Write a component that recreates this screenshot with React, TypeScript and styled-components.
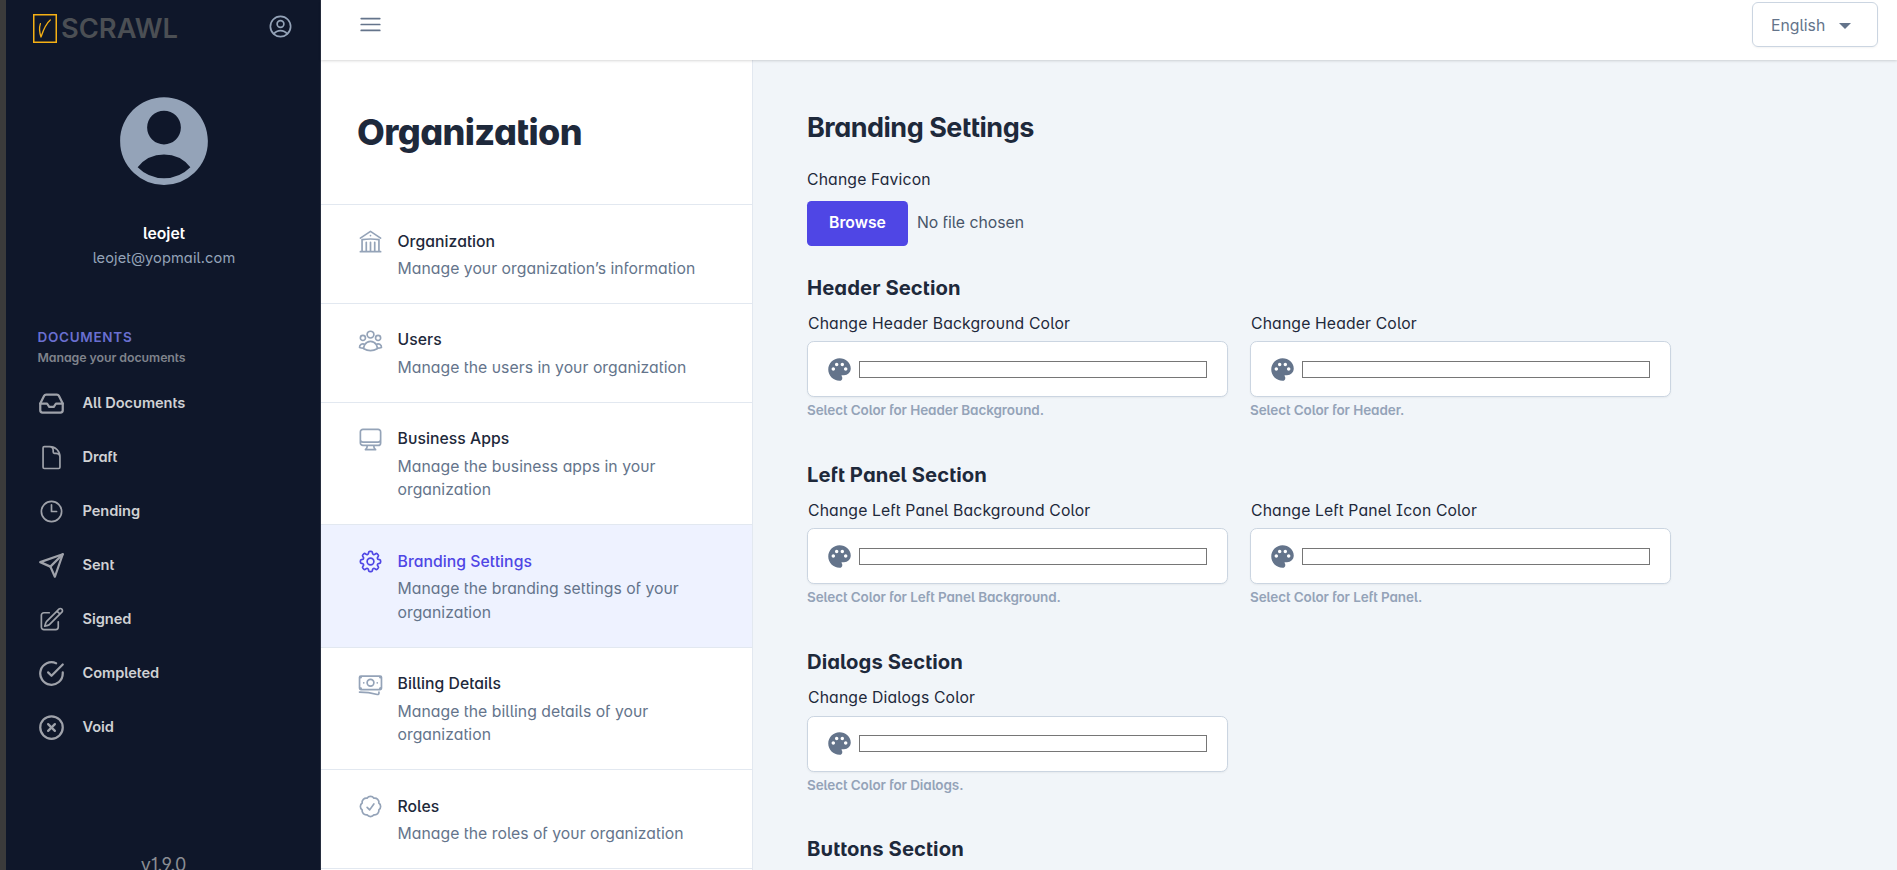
import React from 'react';
import styled, { createGlobalStyle } from 'styled-components';
import type { IconType } from 'react-icons';
import {
  HiOutlineBanknotes,
  HiOutlineBars3,
  HiOutlineBuildingLibrary,
  HiOutlineCheckBadge,
  HiOutlineClock,
  HiOutlineCog8Tooth,
  HiOutlineComputerDesktop,
  HiOutlineDocument,
  HiOutlinePencilSquare,
  HiOutlineUserCircle,
  HiOutlineUserGroup,
  HiUserCircle,
} from 'react-icons/hi2';
import { FiCheckCircle, FiInbox, FiSend, FiXCircle } from 'react-icons/fi';
import { MdPalette } from 'react-icons/md';

const color = {
  ink: '#1e293b',
  muted: '#64748b',
  faint: '#94a3b8',
  line: '#e2e8f0',
  field: '#cbd5e1',
  primary: '#4f46e5',
  canvas: '#f1f5f9',
  navy: '#0f172a',
};

const GlobalStyle = createGlobalStyle`
  *, *::before, *::after { box-sizing: border-box; }
  body {
    margin: 0;
    font-family: Inter, "Liberation Sans", sans-serif;
    font-feature-settings: 'salt', 'cv11';
    font-size: 15.75px;
    line-height: 1.5;
    color: ${color.ink};
  }
  h1, h2, h3, p { margin: 0; }
  svg { display: block; flex: none; }
`;

const Page = styled.div`
  display: flex;
  height: 870px;
  overflow: hidden;
  background: ${color.canvas};
`;

/* ---------- Sidebar ---------- */

const Sidebar = styled.aside`
  flex: none;
  display: flex;
  flex-direction: column;
  width: 321px;
  border-left: 6px solid #3b3b3b;
  border-right: 1px solid #272e3f;
  background: ${color.navy};
  overflow: hidden;

  > * {
    flex: none;
  }
`;

const SidebarTop = styled.div`
  display: flex;
  align-items: flex-start;
  justify-content: space-between;
  height: 87px;
  padding: 12px 26px 0 26px;
  color: ${color.faint};

  > svg:last-child {
    margin-top: 1px;
  }
`;

const Profile = styled.div`
  display: flex;
  flex-direction: column;
  align-items: center;
  padding-left: 2px;
  color: ${color.faint};
`;

const ProfileName = styled.div`
  margin-top: 27px;
  line-height: 24px;
  font-weight: 600;
  color: #fff;
`;

const ProfileMail = styled.div`
  font-size: 14.625px;
  line-height: 24px;
  letter-spacing: 0.08px;
`;

const GroupHead = styled.div`
  margin: 57px 0 9px;
  padding-left: 31.5px;
`;

const GroupTitle = styled.div`
  font-size: 13.5px;
  font-weight: 600;
  line-height: 20px;
  letter-spacing: 0.7px;
  color: #6a6fd0;
`;

const GroupNote = styled.div`
  margin-top: 2px;
  font-size: 12.375px;
  font-weight: 600;
  line-height: 18px;
  letter-spacing: -0.07px;
  color: #7f838c;
`;

const NavItem = styled.a`
  display: flex;
  align-items: center;
  gap: 17.5px;
  height: 54px;
  padding-left: 32px;
  color: #9fa2aa;
`;

const NavLabel = styled.span`
  padding-top: 1.4px;
  font-size: 14.625px;
  font-weight: 600;
  letter-spacing: -0.06px;
  color: #cfd1d4;
`;

const Version = styled.div`
  margin-top: 99px;
  padding-left: 1px;
  text-align: center;
  font-size: 18px;
  line-height: 24px;
  color: #8a8d93;
`;

/* ---------- Header ---------- */

const Content = styled.div`
  flex: 1;
  min-width: 0;
  display: flex;
  flex-direction: column;
`;

const TopBar = styled.header`
  position: relative;
  z-index: 1;
  flex: none;
  display: flex;
  align-items: flex-start;
  justify-content: space-between;
  height: 60px;
  padding: 2px 19px 0 36px;
  background: #fff;
  color: ${color.muted};
  box-shadow: 0 1px 3px rgba(0, 0, 0, 0.1), 0 1px 2px rgba(0, 0, 0, 0.06);
`;

const MenuButton = styled.div`
  padding-top: 9px;
`;

const Language = styled.div`
  display: flex;
  align-items: center;
  justify-content: space-between;
  width: 126px;
  height: 45px;
  padding: 2px 26px 0 18px;
  border: 1px solid ${color.field};
  border-radius: 6px;
  box-shadow: 0 1px 2px rgba(0, 0, 0, 0.05);
`;

const Caret = styled.span`
  border: 6px solid transparent;
  border-top-color: ${color.muted};
  border-bottom: 0;
`;

const Body = styled.div`
  flex: 1;
  display: flex;
  min-height: 0;
`;

/* ---------- Settings list ---------- */

const Panel = styled.nav`
  flex: none;
  width: 432px;
  border-right: 1px solid ${color.line};
  background: #fff;
  overflow: hidden;
`;

const PanelHead = styled.div`
  height: 145px;
  padding: 45px 36px 0;
  border-bottom: 1px solid ${color.line};
`;

const PanelTitle = styled.h1`
  font-size: 36px;
  font-weight: 800;
  line-height: 54px;
  letter-spacing: -0.6px;
`;

const Entry = styled.a<{ $active?: boolean }>`
  display: flex;
  gap: 13.5px;
  padding: 24.6px 36px 22.35px;
  border-bottom: 1px solid ${color.line};
  background: ${(p) => (p.$active ? '#eef2ff' : '#fff')};
  color: ${(p) => (p.$active ? color.primary : color.faint)};

  > svg {
    margin-top: -1.6px;
  }
`;

const EntryTitle = styled.div<{ $active?: boolean }>`
  font-weight: 500;
  letter-spacing: 0.04px;
  color: ${(p) => (p.$active ? color.primary : color.ink)};
`;

const EntryText = styled.div`
  margin-top: 3.7px;
  letter-spacing: 0.03px;
  color: ${color.muted};
`;

/* ---------- Branding form ---------- */

const Main = styled.main`
  flex: 1;
  min-width: 0;
  padding: 48px 54px 0;
  overflow: hidden;
`;

const Title = styled.h2`
  font-size: 27px;
  font-weight: 700;
  line-height: 40px;
  letter-spacing: -0.5px;
`;

const Label = styled.div`
  font-weight: 400;
  line-height: 24px;
  letter-spacing: 0.14px;
`;

const FileBlock = styled.div`
  padding: 20px 0 27.5px;
`;

const FileRow = styled.div`
  display: flex;
  align-items: center;
  gap: 9px;
  margin-top: 9px;
  color: #475569;
`;

const BrowseButton = styled.button`
  width: 101px;
  height: 45px;
  padding: 0 0 2px;
  border: 0;
  border-radius: 4.5px;
  background: ${color.primary};
  color: #fff;
  font: inherit;
  font-weight: 600;
  font-feature-settings: inherit;
`;

const FileName = styled.span`
  padding-bottom: 2px;
`;

const Section = styled.section`
  height: 187.25px;
`;

const SectionTitle = styled.h3`
  font-size: 20.25px;
  font-weight: 700;
  line-height: 27px;
  letter-spacing: 0.08px;
`;

const Fields = styled.div`
  display: flex;
  gap: 22px;
  margin-top: 11px;
`;

const Field = styled.div`
  width: 421px;

  ${Label} {
    padding-left: 1px;
  }
`;

const ColorBox = styled.div`
  display: flex;
  align-items: center;
  gap: 6px;
  height: 56px;
  margin-top: 5.5px;
  padding: 0 20px 0 18px;
  border: 1px solid ${color.field};
  border-radius: 6.75px;
  background: #fff;
  color: ${color.muted};
  box-shadow: 0 1px 2px rgba(0, 0, 0, 0.05);
`;

const Swatch = styled.div`
  flex: 1;
  height: 17px;
  border: 1px solid #767676;
`;

const Hint = styled.div`
  margin-top: 4px;
  font-size: 13.5px;
  font-weight: 600;
  line-height: 18px;
  letter-spacing: -0.08px;
  color: ${color.faint};
`;

/* ---------- Data ---------- */

const navItems: { label: string; icon: IconType }[] = [
  { label: 'All Documents', icon: FiInbox },
  { label: 'Draft', icon: HiOutlineDocument },
  { label: 'Pending', icon: HiOutlineClock },
  { label: 'Sent', icon: FiSend },
  { label: 'Signed', icon: HiOutlinePencilSquare },
  { label: 'Completed', icon: FiCheckCircle },
  { label: 'Void', icon: FiXCircle },
];

const entries: { title: string; text: string; icon: IconType; active?: boolean }[] = [
  { title: 'Organization', text: 'Manage your organization’s information', icon: HiOutlineBuildingLibrary },
  { title: 'Users', text: 'Manage the users in your organization', icon: HiOutlineUserGroup },
  { title: 'Business Apps', text: 'Manage the business apps in your organization', icon: HiOutlineComputerDesktop },
  { title: 'Branding Settings', text: 'Manage the branding settings of your organization', icon: HiOutlineCog8Tooth, active: true },
  { title: 'Billing Details', text: 'Manage the billing details of your organization', icon: HiOutlineBanknotes },
  { title: 'Roles', text: 'Manage the roles of your organization', icon: HiOutlineCheckBadge },
];

const sections: { title: string; fields: [string, string][] }[] = [
  {
    title: 'Header Section',
    fields: [
      ['Change Header Background Color', 'Select Color for Header Background.'],
      ['Change Header Color', 'Select Color for Header.'],
    ],
  },
  {
    title: 'Left Panel Section',
    fields: [
      ['Change Left Panel Background Color', 'Select Color for Left Panel Background.'],
      ['Change Left Panel Icon Color', 'Select Color for Left Panel.'],
    ],
  },
  { title: 'Dialogs Section', fields: [['Change Dialogs Color', 'Select Color for Dialogs.']] },
  { title: 'Buttons Section', fields: [] },
];

const Logo = () => (
  <svg width="146" height="34" viewBox="0 0 146 34">
    <rect x="1.75" y="2.75" width="22.5" height="27.5" fill="none" stroke="#f5b014" strokeWidth="1.5" />
    <path
      d="M8.4 11.6c-1.2 3.6-1 8.6.6 13.4C11 19 14 11.5 18.3 8"
      fill="none"
      stroke="#f5b014"
      strokeWidth="1.3"
      strokeLinecap="round"
      strokeLinejoin="round"
    />
    <text
      x="29"
      y="26.300"
      textLength="117"
      lengthAdjust="spacingAndGlyphs"
      fontFamily="Inter, sans-serif"
      fontWeight="600"
      fontSize="26.5"
      fill="#4b4f54"
    >
      SCRAWL
    </text>
  </svg>
);

export default function App() {
  return (
    <Page>
      <GlobalStyle />
      <Sidebar>
        <SidebarTop>
          <Logo />
          <HiOutlineUserCircle size={27} />
        </SidebarTop>
        <Profile>
          <HiUserCircle size={108} />
          <ProfileName>leojet</ProfileName>
          <ProfileMail>leojet@yopmail.com</ProfileMail>
        </Profile>
        <GroupHead>
          <GroupTitle>DOCUMENTS</GroupTitle>
          <GroupNote>Manage your documents</GroupNote>
        </GroupHead>
        {navItems.map(({ label, icon: Icon }) => (
          <NavItem key={label}>
            <Icon size={27} />
            <NavLabel>{label}</NavLabel>
          </NavItem>
        ))}
        <Version>v1.9.0</Version>
      </Sidebar>
      <Content>
        <TopBar>
          <MenuButton>
            <HiOutlineBars3 size={27} />
          </MenuButton>
          <Language>
            English
            <Caret />
          </Language>
        </TopBar>
        <Body>
          <Panel>
            <PanelHead>
              <PanelTitle>Organization</PanelTitle>
            </PanelHead>
            {entries.map(({ title, text, icon: Icon, active }) => (
              <Entry key={title} $active={active}>
                <Icon size={27} />
                <div>
                  <EntryTitle $active={active}>{title}</EntryTitle>
                  <EntryText>{text}</EntryText>
                </div>
              </Entry>
            ))}
          </Panel>
          <Main>
            <Title>Branding Settings</Title>
            <FileBlock>
              <Label>Change Favicon</Label>
              <FileRow>
                <BrowseButton>Browse</BrowseButton>
                <FileName>No file chosen</FileName>
              </FileRow>
            </FileBlock>
            {sections.map((section) => (
              <Section key={section.title}>
                <SectionTitle>{section.title}</SectionTitle>
                <Fields>
                  {section.fields.map(([label, hint]) => (
                    <Field key={label}>
                      <Label>{label}</Label>
                      <ColorBox>
                        <MdPalette size={27} />
                        <Swatch />
                      </ColorBox>
                      <Hint>{hint}</Hint>
                    </Field>
                  ))}
                </Fields>
              </Section>
            ))}
          </Main>
        </Body>
      </Content>
    </Page>
  );
}
